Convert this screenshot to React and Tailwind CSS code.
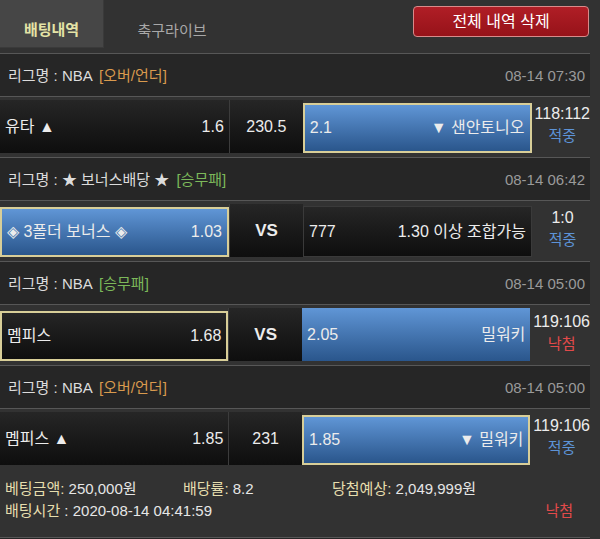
import React from "react";

const FONT = { fontFamily: '"Liberation Sans", "Noto Sans CJK KR", sans-serif' };

const bets = [
  {
    league: "NBA",
    tag: "[오버/언더]",
    tagColor: "text-[#d99a4e]",
    date: "08-14 07:30",
    left: { text: "유타 ▲", odd: "1.6", kind: "black" },
    mid: "230.5",
    right: { odd: "2.1", text: "▼ 샌안토니오", kind: "blue", selected: true },
    score: "118:112",
    result: "적중",
  },
  {
    league: "★ 보너스배당 ★",
    tag: "[승무패]",
    tagColor: "text-[#7cb85a]",
    date: "08-14 06:42",
    left: { text: "◈ 3폴더 보너스 ◈", odd: "1.03", kind: "blue", selected: true },
    mid: "VS",
    right: { odd: "777", text: "1.30 이상 조합가능", kind: "black", boxed: true },
    score: "1:0",
    result: "적중",
  },
  {
    league: "NBA",
    tag: "[승무패]",
    tagColor: "text-[#7cb85a]",
    date: "08-14 05:00",
    left: { text: "멤피스", odd: "1.68", kind: "black", selected: true },
    mid: "VS",
    right: { odd: "2.05", text: "밀워키", kind: "blue" },
    score: "119:106",
    result: "낙첨",
  },
  {
    league: "NBA",
    tag: "[오버/언더]",
    tagColor: "text-[#d99a4e]",
    date: "08-14 05:00",
    left: { text: "멤피스 ▲", odd: "1.85", kind: "black" },
    mid: "231",
    right: { odd: "1.85", text: "▼ 밀워키", kind: "blue", selected: true },
    score: "119:106",
    result: "적중",
  },
];

function Pick({ pick, side }) {
  const bg =
    pick.kind === "blue"
      ? "bg-linear-to-b from-[#6096d6] to-[#2a568c]"
      : "bg-linear-to-b from-[#262626] to-[#0e0e0e]";
  const frame = pick.selected
    ? "h-[50px] self-end border-2 border-[#d8ce98]"
    : pick.boxed
    ? "h-[51px] self-end border border-[#3a3a3a]"
    : "h-full";
  return (
    <div
      className={`w-[229px] flex items-center justify-between px-[5px] text-[16px] text-[#ececec] ${bg} ${frame}`}
    >
      {side === "left" ? (
        <>
          <span>{pick.text}</span>
          <span>{pick.odd}</span>
        </>
      ) : (
        <>
          <span>{pick.odd}</span>
          <span>{pick.text}</span>
        </>
      )}
    </div>
  );
}

function BetBlock({ bet }) {
  const isVs = bet.mid === "VS";
  return (
    <div>
      {/* league row */}
      <div className="h-[43px] border-t border-[#575757] bg-[#262626] flex items-center justify-between pl-[8px] pr-[5px] pt-[3px] text-[15px]">
        <span className="text-[#dcdcdc]">
          리그명 : {bet.league} <span className={`ml-[3px] ${bet.tagColor}`}>{bet.tag}</span>
        </span>
        <span className="text-[#9a9a9a]">{bet.date}</span>
      </div>
      {/* bet row */}
      <div className="h-[61px] border-t border-[#575757] pt-[3px] pb-[4px]">
        <div className="flex h-full items-stretch">
          <Pick pick={bet.left} side="left" />
          <div
            className={`w-[74px] flex items-center justify-center bg-linear-to-b from-[#262626] to-[#0e0e0e] border-l border-[#3c3c3c] text-[#ececec] ${
              isVs ? "text-[17px] font-bold" : "text-[16px]"
            }`}
          >
            {bet.mid}
          </div>
          <Pick pick={bet.right} side="right" />
          <div className="flex-1 flex flex-col items-center justify-center leading-[22px] -mt-[3px] pl-[3px]">
            <span className="text-[16px] text-[#ececec]">{bet.score}</span>
            <span
              className={`text-[15px] ${
                bet.result === "적중" ? "text-[#5d93d6]" : "text-[#e24a4a]"
              }`}
            >
              {bet.result}
            </span>
          </div>
        </div>
      </div>
    </div>
  );
}

export default function App() {
  return (
    <div className="w-[600px] h-[539px] overflow-hidden bg-[#323232]" style={FONT}>
      {/* tab bar */}
      <div className="h-[53px] flex items-start">
        <div className="w-[104px] h-[48px] bg-[#464646] border-r border-b border-[#3a3a3a] flex items-end justify-center pb-[6px]">
          <span className="text-[15px] font-bold text-[#e4e4a6]">배팅내역</span>
        </div>
        <div className="w-[136px] h-[48px] flex items-end justify-center pb-[6px]">
          <span className="text-[15px] text-[#a8a8a8]">축구라이브</span>
        </div>
        <div className="flex-1 flex justify-end pr-[11px] pt-[6px]">
          <button className="w-[176px] h-[31px] rounded-[4px] border border-[#d88a8a] bg-linear-to-b from-[#b01e26] to-[#961219] text-[16px] text-white">
            전체 내역 삭제
          </button>
        </div>
      </div>

      <div className="w-[590px]">
        {bets.map((bet, i) => (
          <BetBlock key={i} bet={bet} />
        ))}

        {/* summary */}
        <div className="h-[68px] pl-[5px] pt-[9px] text-[15px] leading-[22px] text-[#e6e6e6]">
          <div className="flex">
            <span className="w-[178px]">
              <span className="text-[#e6deae]">베팅금액:</span> 250,000원
            </span>
            <span className="w-[149px]">
              <span className="text-[#e6deae]">배당률:</span> 8.2
            </span>
            <span>
              <span className="text-[#e6deae]">당첨예상:</span> 2,049,999원
            </span>
          </div>
          <div className="flex justify-between pr-[17px]">
            <span>
              <span className="text-[#e6deae]">배팅시간</span> : 2020-08-14 04:41:59
            </span>
            <span className="text-[#e24a4a]">낙첨</span>
          </div>
        </div>
        <div className="border-t border-[#575757] h-[10px] bg-[#262626]" />
      </div>
    </div>
  );
}
